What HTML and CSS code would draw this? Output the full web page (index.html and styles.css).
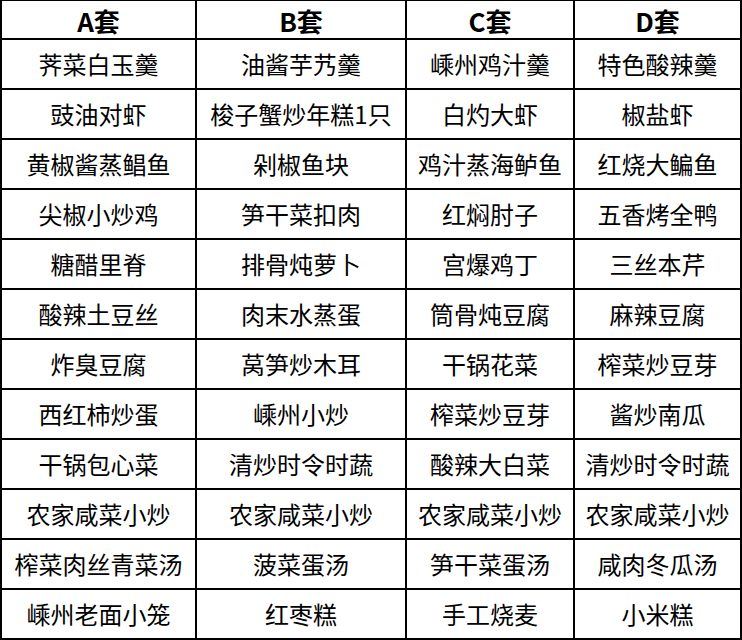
FILE: index.html
```html
<!DOCTYPE html>
<html lang="zh-CN">
<head>
<meta charset="utf-8">
<link rel="stylesheet" href="styles.css">
</head>
<body>
<div class="menu">
  <div class="cell head">A套</div><div class="cell head">B套</div><div class="cell head">C套</div><div class="cell head">D套</div>
  <div class="cell">荠菜白玉羹</div><div class="cell">油酱芋艿羹</div><div class="cell">嵊州鸡汁羹</div><div class="cell">特色酸辣羹</div>
  <div class="cell">豉油对虾</div><div class="cell">梭子蟹炒年糕1只</div><div class="cell">白灼大虾</div><div class="cell">椒盐虾</div>
  <div class="cell">黄椒酱蒸鲳鱼</div><div class="cell">剁椒鱼块</div><div class="cell">鸡汁蒸海鲈鱼</div><div class="cell">红烧大鳊鱼</div>
  <div class="cell">尖椒小炒鸡</div><div class="cell">笋干菜扣肉</div><div class="cell">红焖肘子</div><div class="cell">五香烤全鸭</div>
  <div class="cell">糖醋里脊</div><div class="cell">排骨炖萝卜</div><div class="cell">宫爆鸡丁</div><div class="cell">三丝本芹</div>
  <div class="cell">酸辣土豆丝</div><div class="cell">肉末水蒸蛋</div><div class="cell">筒骨炖豆腐</div><div class="cell">麻辣豆腐</div>
  <div class="cell">炸臭豆腐</div><div class="cell">莴笋炒木耳</div><div class="cell">干锅花菜</div><div class="cell">榨菜炒豆芽</div>
  <div class="cell">西红柿炒蛋</div><div class="cell">嵊州小炒</div><div class="cell">榨菜炒豆芽</div><div class="cell">酱炒南瓜</div>
  <div class="cell">干锅包心菜</div><div class="cell">清炒时令时蔬</div><div class="cell">酸辣大白菜</div><div class="cell">清炒时令时蔬</div>
  <div class="cell">农家咸菜小炒</div><div class="cell">农家咸菜小炒</div><div class="cell">农家咸菜小炒</div><div class="cell">农家咸菜小炒</div>
  <div class="cell">榨菜肉丝青菜汤</div><div class="cell">菠菜蛋汤</div><div class="cell">笋干菜蛋汤</div><div class="cell">咸肉冬瓜汤</div>
  <div class="cell">嵊州老面小笼</div><div class="cell">红枣糕</div><div class="cell">手工烧麦</div><div class="cell">小米糕</div>
</div>
</body>
</html>
```
FILE: styles.css
```css
html, body {
  margin: 0;
  padding: 0;
  background: #ffffff;
}
.menu {
  width: 742px;
  box-sizing: border-box;
  display: grid;
  grid-template-columns: 195px 210px 168px 167px;
  grid-template-rows: 39px repeat(12, 50px);
  border-left: 2px solid #000;
  border-top: 1px solid #000;
  font-family: "Noto Sans CJK SC", "Microsoft YaHei", sans-serif;
  color: #000;
}
.cell {
  box-sizing: border-box;
  border-right: 2px solid #000;
  border-bottom: 2px solid #000;
  display: flex;
  align-items: center;
  justify-content: center;
  font-size: 24px;
  line-height: 1;
  white-space: nowrap;
}
.head {
  font-weight: 700;
  font-size: 26px;
  padding-top: 3px;
}
```
